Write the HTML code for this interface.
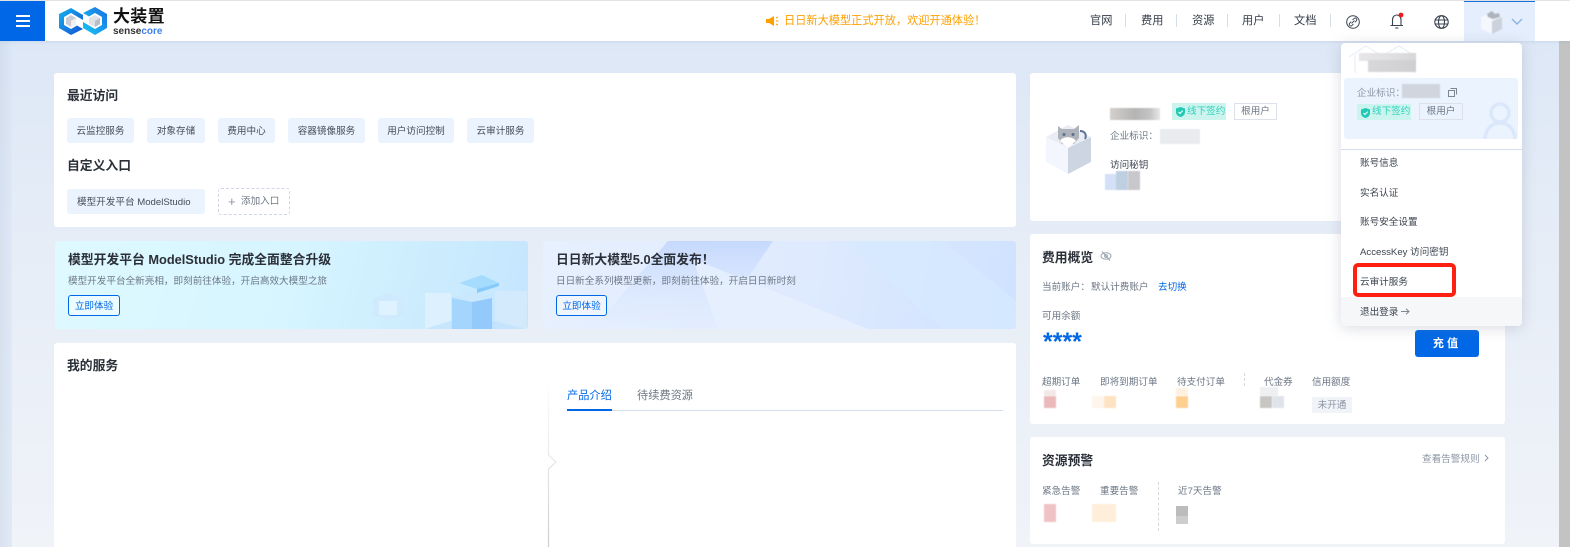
<!DOCTYPE html>
<html lang="zh"><head><meta charset="utf-8"><title>大装置</title>
<style>
*{box-sizing:border-box;margin:0;padding:0}
html,body{width:1570px;height:547px;overflow:hidden}
body{position:relative;font-family:"Liberation Sans","Noto Sans CJK SC",sans-serif;background:linear-gradient(180deg,#dbe6f6 0,#e6edf7 45%,#f0f3f8 100%);color:#333b47}
.a,.t{position:absolute}
.t{white-space:nowrap;line-height:16px;font-size:9.6px;color:#3c4450;margin-top:2px}
.card{position:absolute;background:#fff;border-radius:3px}
.h{font-size:12.8px;font-weight:700;color:#2b3038}
.chip{position:absolute;height:25px;background:#eaf3fe;border-radius:3px;font-size:9.6px;line-height:27px;text-align:center;color:#444c58;white-space:nowrap}
.nav{font-size:11.2px;color:#333b47;margin-top:1px}
.one{margin-top:1px}
.sep{position:absolute;top:14px;width:1px;height:13px;background:#d5dde8}
.b{position:absolute;filter:blur(.6px)}
.g{color:#6d7785}
.btn{position:absolute;height:21px;border:1px solid #0068e6;border-radius:3px;font-size:9.6px;line-height:21px;text-align:center;color:#0068e6;background:rgba(255,255,255,.45)}
.tag{position:absolute;height:17px;background:#ccf4ee;color:#2fd0bc;font-size:9.6px;line-height:17px;padding-left:15px;white-space:nowrap}
.root{position:absolute;height:17px;border:1px solid #dde2ea;color:#6d7785;font-size:9.6px;line-height:16px;text-align:center}
.shield{position:absolute;left:4px;top:4px}
.item{font-size:9.6px;color:#3c4450;left:1360px}
</style></head><body>

<!-- page edges -->
<div class="a" style="left:0;top:41px;width:12px;height:506px;background:linear-gradient(90deg,#cfdaea,#dbe6f6 100%);opacity:.7"></div>
<div class="a" style="left:1559px;top:41px;width:11px;height:506px;background:#c3c3c3"></div>

<!-- header -->
<div class="a" style="left:0;top:0;width:1570px;height:1px;background:#e6e6e6"></div>
<div class="a" style="left:0;top:1px;width:1570px;height:40px;background:#fff;box-shadow:0 1px 3px rgba(120,140,170,.18)"></div>
<div class="a" style="left:0;top:1px;width:45px;height:40px;background:#0068e6"></div>
<div class="a" style="left:16px;top:15px;width:14px;height:1.5px;background:#fff"></div>
<div class="a" style="left:16px;top:20px;width:14px;height:1.5px;background:#fff"></div>
<div class="a" style="left:16px;top:25px;width:14px;height:1.5px;background:#fff"></div>

<svg class="a" style="left:58px;top:6px" width="50" height="30" viewBox="0 0 50 30">
<defs><linearGradient id="l1" x1="0" y1="0" x2="1" y2="1"><stop offset="0" stop-color="#14b4f0"/><stop offset="1" stop-color="#1450d2"/></linearGradient>
<linearGradient id="l2" x1="0" y1="1" x2="1" y2="0"><stop offset="0" stop-color="#18c8f5"/><stop offset="1" stop-color="#1a6fe0"/></linearGradient></defs>
<path d="M13 2 L25 9 V14 L19 10.5 L13 7 L6 11 V19 L13 23 L19 19.5 L25 23 L13 29 L1 22 V8Z" fill="url(#l1)"/>
<path d="M37 1 L49 8 V22 L37 29 L25 22 V16 L31 19.5 L37 23 L44 19 V11 L37 7 L31 10.5 L25 7Z" fill="url(#l2)"/>
<path d="M8 12 L13 9 L18 12 V18 L13 21 L8 18Z" fill="#c9ccd2"/><path d="M13 15 L18 12 V18 L13 21Z" fill="#eef0f2"/>
<path d="M31 12 L37 9 L42 12 V18 L37 21 L31 18Z" fill="#dfe2e6"/><path d="M37 15 L42 12 V18 L37 21Z" fill="#b9bdc4"/>
</svg>
<div class="t" style="left:113px;top:6px;font-size:17px;line-height:18px;font-weight:700;color:#111;letter-spacing:.3px">大装置</div>
<div class="t" style="left:113px;top:23px;font-size:10px;line-height:13px;font-weight:700;color:#333">sense<span style="color:#3f7fee">core</span></div>

<svg class="a" style="left:765px;top:15px" width="14" height="12" viewBox="0 0 14 12"><path d="M1 4 H4 L9 1 V11 L4 8 H1Z" fill="#ffa000"/><path d="M11 3 L13 2 M11 6 H13.5 M11 9 L13 10" stroke="#ffa000" stroke-width="1"/></svg>
<div class="t one" style="left:784px;top:12px;font-size:11.2px;color:#ffa000">日日新大模型正式开放，欢迎开通体验！</div>

<div class="t nav" style="left:1090px;top:12px">官网</div><div class="sep" style="left:1125px"></div>
<div class="t nav" style="left:1141px;top:12px">费用</div><div class="sep" style="left:1176px"></div>
<div class="t nav" style="left:1192px;top:12px">资源</div><div class="sep" style="left:1227px"></div>
<div class="t nav" style="left:1242px;top:12px">用户</div><div class="sep" style="left:1279px"></div>
<div class="t nav" style="left:1294px;top:12px">文档</div><div class="sep" style="left:1330px"></div>

<svg class="a" style="left:1346px;top:15px" width="14" height="14" viewBox="0 0 14 14" fill="none" stroke="#3b4350"><circle cx="7" cy="7" r="6.3"/><path d="M6.5 5 L8 3.6 A1.4 1.4 0 0 1 10.3 5.8 L8.8 7.3" stroke-width=".9"/><path d="M7.4 9 L6 10.4 A1.4 1.4 0 0 1 3.7 8.2 L5.2 6.7" stroke-width=".9"/><path d="M5.6 8.4 L8.4 5.6" stroke-width=".9"/></svg>
<svg class="a" style="left:1388px;top:12px" width="17" height="18" viewBox="0 0 17 18" fill="none" stroke="#3b4350" stroke-width="1.1"><path d="M2.5 13.5 H15 M4.5 13 V8 C4.5 4.8 6.7 3 8.8 3 S13 4.8 13 8 V13"/><path d="M7.3 16 H10.3"/><circle cx="13" cy="3" r="2.4" fill="#f01a1a" stroke="none"/></svg>
<svg class="a" style="left:1434px;top:15px" width="15" height="14" viewBox="0 0 15 14" fill="none" stroke="#3b4350" stroke-width="1.1"><ellipse cx="7.5" cy="7" rx="6.7" ry="6.3"/><ellipse cx="7.5" cy="7" rx="3" ry="6.3"/><path d="M1 5 H14 M1 9 H14"/></svg>

<div class="a" style="left:1464px;top:1px;width:71px;height:40px;background:#e4eefc;border-top:1px solid #1a6fe0"></div>
<svg class="a" style="left:1480px;top:9px;filter:blur(.6px)" width="26" height="26" viewBox="0 0 26 26"><path d="M1 8 L12 3 L22 8 V20 L12 25 L1 20Z" fill="#f4f7fc"/><path d="M12 12 L22 8 V20 L12 25Z" fill="#ccd2dc"/><path d="M7 5 L12 2 L15 5 L19 4 L20 8 L13 10 L8 8Z" fill="#aeb4bd"/></svg>
<svg class="a" style="left:1511px;top:18px" width="12" height="8" viewBox="0 0 12 8" fill="none" stroke="#8cb2e6" stroke-width="1.4"><path d="M1 1 L6 6 L11 1"/></svg>

<!-- recent card -->
<div class="card" style="left:54px;top:73px;width:962px;height:154px"></div>
<div class="t h one" style="left:67px;top:87px">最近访问</div>
<div class="chip" style="left:67px;top:118px;width:67px">云监控服务</div>
<div class="chip" style="left:147px;top:118px;width:58px">对象存储</div>
<div class="chip" style="left:218px;top:118px;width:57px">费用中心</div>
<div class="chip" style="left:288px;top:118px;width:77px">容器镜像服务</div>
<div class="chip" style="left:378px;top:118px;width:76px">用户访问控制</div>
<div class="chip" style="left:467px;top:118px;width:67px">云审计服务</div>
<div class="t h one" style="left:67px;top:157px">自定义入口</div>
<div class="chip" style="left:67px;top:189px;width:138px;text-align:left;padding-left:10px">模型开发平台 ModelStudio</div>
<div class="a" style="left:218px;top:188px;width:72px;height:27px;border:1px dashed #cfd6e4;border-radius:3px"></div>
<div class="t g" style="left:228px;top:192px;font-size:13px;color:#8d96a3">+</div>
<div class="t g" style="left:241px;top:192px">添加入口</div>

<!-- banners -->
<div class="a" style="left:55px;top:241px;width:473px;height:88px;border-radius:3px;overflow:hidden;background:linear-gradient(105deg,#dff9ff 0,#d6f5ff 50%,#c4e5fe 100%)">
<svg class="a" style="left:310px;top:30px" width="163" height="58" viewBox="0 0 163 58">
<path d="M8 27 L23 22 L39 27 V44 L23 49 L8 44Z" fill="#cfe9fd" opacity=".8"/><path d="M14 30 H32 V44 H14Z" fill="#dff2ff"/>
<rect x="60" y="22" width="26" height="36" fill="#e3f2fd" opacity=".75"/><rect x="130" y="20" width="32" height="38" fill="#d6eafb" opacity=".8"/>
<path d="M60 58 L85 50 H130 L160 58Z" fill="#bfe0fd" opacity=".7"/>
<path d="M87 27 L107 22 L127 27 V58 H87Z" fill="#a4d5fd"/><path d="M107 31 L127 27 V58 H107Z" fill="#93c9fb"/><path d="M87 27 L107 22 L127 27 L107 31Z" fill="#c9e8fe"/>
<path d="M94 12 L117 4 L134 12 L112 18Z" fill="#a5dcfd"/><path d="M112 18 L134 12 V15 L112 22Z" fill="#86c9fb"/>
</svg></div>
<div class="t h one" style="left:68px;top:251px">模型开发平台 ModelStudio 完成全面整合升级</div>
<div class="t g" style="left:68px;top:272px">模型开发平台全新亮相，即刻前往体验，开启高效大模型之旅</div>
<div class="btn" style="left:68px;top:295px;width:52px">立即体验</div>

<div class="a" style="left:543px;top:241px;width:473px;height:88px;border-radius:3px;overflow:hidden;background:linear-gradient(100deg,#e6f0fe 0,#dfeafe 55%,#cfe2ff 100%)">
<svg class="a" style="left:0;top:0" width="473" height="88" viewBox="0 0 473 88"><defs><linearGradient id="s1" x1="0" y1="0" x2="0" y2="1"><stop offset="0" stop-color="#c6d9fd"/><stop offset="1" stop-color="#e4eefe" stop-opacity=".4"/></linearGradient></defs><path d="M125 0 H230 L170 88 H50 Z" fill="url(#s1)"/><path d="M150 18 L325 88 H175Z" fill="#e6effe" opacity=".9"/><path d="M300 0 H400 L473 60 V88 H400Z" fill="#d6e9ff" opacity=".7"/></svg></div>
<div class="t h one" style="left:556px;top:251px">日日新大模型5.0全面发布！</div>
<div class="t g" style="left:556px;top:272px">日日新全系列模型更新，即刻前往体验，开启日日新时刻</div>
<div class="btn" style="left:556px;top:295px;width:51px">立即体验</div>

<!-- services -->
<div class="card" style="left:54px;top:343px;width:962px;height:210px"></div>
<div class="t h" style="left:67px;top:356px">我的服务</div>
<svg class="a" style="left:545px;top:378px" width="14" height="169" viewBox="0 0 14 169" fill="none"><defs><linearGradient id="vg" x1="0" y1="0" x2="0" y2="1"><stop offset="0" stop-color="#fff"/><stop offset="1" stop-color="#cfcfcf"/></linearGradient></defs><path d="M3.5 0 V77 L11 84 L3.5 91 V169" stroke="url(#vg)" stroke-width="1.2"/></svg>
<div class="t" style="left:567px;top:386px;font-size:11.2px;color:#0068e6">产品介绍</div>
<div class="t" style="left:637px;top:386px;font-size:11.2px;color:#6d7785">待续费资源</div>
<div class="a" style="left:567px;top:410px;width:436px;height:1px;background:#d5ddea"></div>
<div class="a" style="left:567px;top:409px;width:45px;height:2px;background:#0068e6"></div>

<!-- account card -->
<div class="card" style="left:1030px;top:73px;width:475px;height:148px"></div>
<svg class="a" style="left:1045px;top:122px" width="48" height="54" viewBox="0 0 48 54"><path d="M1 15 L23 26 V52 L1 40Z" fill="#f3f7fd"/><path d="M23 26 L46 15 V40 L23 52Z" fill="#cdd5e2"/><path d="M1 15 L23 3 L46 15 L23 26Z" fill="#e9edf3"/><path d="M13 4 L17 7 H29 L34 3 V16 L29 22 H17 L13 16Z" fill="#aeb3bb"/><circle cx="19" cy="12.5" r="1.5" fill="#5c6f8c"/><circle cx="28" cy="12.5" r="1.5" fill="#5c6f8c"/><path d="M15 19 C17 14 28 14 31 19 L23 26Z" fill="#fff"/><path d="M35 9 C40 9 42 13 40 17" stroke="#5c7494" stroke-width="2" fill="none"/></svg>
<div class="b" style="left:1110px;top:108px;width:50px;height:12px;background:linear-gradient(90deg,#d4d0cc,#b4b4b4 50%,#c4c4c4 80%,#e8e8e8)"></div>
<div class="tag" style="left:1172px;top:103px;width:54px">
<svg class="shield" width="9" height="10" viewBox="0 0 9 10"><path d="M4.5 0 L9 1.5 V5 C9 8 6.5 9.5 4.5 10 C2.5 9.5 0 8 0 5 V1.5Z" fill="#22c9b4"/><path d="M2.5 5 L4 6.5 L6.7 3.6" stroke="#fff" fill="none"/></svg>线下签约</div>
<div class="root" style="left:1234px;top:103px;width:43px">根用户</div>
<div class="t g" style="left:1110px;top:127px">企业标识：</div>
<div class="b" style="left:1160px;top:129px;width:40px;height:15px;background:#e9ebef"></div>
<div class="t" style="left:1110px;top:156px">访问秘钥</div>
<div class="b" style="left:1105px;top:174px;width:12px;height:16px;background:#d3e0f7"></div>
<div class="b" style="left:1116px;top:171px;width:12px;height:19px;background:#bfcfe2"></div>
<div class="b" style="left:1128px;top:171px;width:12px;height:19px;background:#c8c8cc"></div>

<!-- cost card -->
<div class="card" style="left:1030px;top:234px;width:475px;height:190px"></div>
<div class="t h" style="left:1042px;top:248px">费用概览</div>
<svg class="a" style="left:1100px;top:250px" width="12" height="12" viewBox="0 0 12 12" fill="none" stroke="#9aa3b0"><ellipse cx="6" cy="6" rx="5" ry="3.2"/><circle cx="6" cy="6" r="1.4"/><path d="M2 1.5 L10 10.5"/></svg>
<div class="t g" style="left:1042px;top:278px">当前账户：</div>
<div class="t g" style="left:1091px;top:278px">默认计费账户</div>
<div class="t" style="left:1158px;top:278px;color:#0068e6">去切换</div>
<div class="t g" style="left:1042px;top:307px">可用余额</div>
<div class="t" style="left:1043px;top:331px;font-size:25px;font-weight:700;color:#0068e6;line-height:18px">****</div>
<div class="a" style="left:1415px;top:330px;width:64px;height:27px;background:#0068e6;border-radius:3px;color:#fff;font-size:11.2px;line-height:29px;text-align:center;letter-spacing:3px;font-weight:700">充值</div>
<div class="t g" style="left:1042px;top:373px">超期订单</div>
<div class="t g" style="left:1100px;top:373px">即将到期订单</div>
<div class="t g" style="left:1177px;top:373px">待支付订单</div>
<div class="a" style="left:1244px;top:373px;height:13px;border-left:1px dashed #d5d8de"></div>
<div class="t g" style="left:1264px;top:373px">代金券</div>
<div class="t g" style="left:1312px;top:373px">信用额度</div>
<div class="b" style="left:1044px;top:396px;width:12px;height:12px;background:#ebb9bb"></div>
<div class="b" style="left:1044px;top:390px;width:12px;height:6px;background:#f3e8e8"></div>
<div class="b" style="left:1092px;top:396px;width:12px;height:12px;background:#fef5ec"></div>
<div class="b" style="left:1104px;top:396px;width:12px;height:12px;background:#fde3c4"></div>
<div class="b" style="left:1176px;top:396px;width:12px;height:12px;background:#ffcf90"></div>
<div class="b" style="left:1176px;top:388px;width:12px;height:8px;background:#fdf2e2"></div>
<div class="b" style="left:1260px;top:396px;width:12px;height:12px;background:#c8c6c2"></div>
<div class="b" style="left:1272px;top:396px;width:12px;height:12px;background:#e0e4ea"></div>
<div class="b" style="left:1260px;top:387px;width:18px;height:9px;background:#eeeff1"></div>
<div class="a" style="left:1312px;top:397px;width:40px;height:16px;background:#f0f3f7;color:#8d96a3;font-size:9.6px;line-height:17px;text-align:center">未开通</div>

<!-- resources card -->
<div class="card" style="left:1030px;top:437px;width:475px;height:107px"></div>
<div class="t h" style="left:1042px;top:451px">资源预警</div>
<div class="t" style="left:1422px;top:450px;color:#8d96a3">查看告警规则</div>
<svg class="a" style="left:1484px;top:454px" width="6" height="8" viewBox="0 0 6 8" fill="none" stroke="#8d96a3"><path d="M1 1 L4 4 L1 7"/></svg>
<div class="t g" style="left:1042px;top:482px">紧急告警</div>
<div class="t g" style="left:1100px;top:482px">重要告警</div>
<div class="a" style="left:1158px;top:482px;height:49px;border-left:1px dashed #d5d8de"></div>
<div class="t g" style="left:1178px;top:482px">近7天告警</div>
<div class="b" style="left:1044px;top:504px;width:12px;height:18px;background:#efc3c5"></div>
<div class="b" style="left:1092px;top:504px;width:24px;height:18px;background:#feeeda"></div>
<div class="a" style="left:1176px;top:506px;width:12px;height:12px;background:#bcbcbc"></div>
<div class="a" style="left:1176px;top:516px;width:12px;height:8px;background:#cdcdcd"></div>

<!-- dropdown -->
<div class="a" style="left:1341px;top:43px;width:181px;height:283px;background:#fff;border-radius:4px;box-shadow:0 2px 14px rgba(120,130,150,.28);overflow:hidden">
<div class="a" style="left:0;top:254px;width:181px;height:29px;background:#f6f7f9"></div>
<svg class="a" style="left:8px;top:0" width="70" height="30" viewBox="0 0 70 30" fill="none" stroke="#e4ecf7"><path d="M0 14 L17 3 L33 13 V30 M33 13 L50 3 L66 13 V30 M6 12 V30"/></svg>
</div>
<div class="b" style="left:1359px;top:53px;width:57px;height:8px;background:linear-gradient(90deg,#e6e6e8,#e0e0e2 60%,#d6d6d8)"></div>
<div class="b" style="left:1368px;top:60px;width:48px;height:12px;background:linear-gradient(90deg,#d8d8da,#cfcfd1)"></div>
<div class="a" style="left:1344px;top:78px;width:174px;height:61px;background:#eaf3fe;border-radius:3px;overflow:hidden">
<svg class="a" style="left:138px;top:23px" width="36" height="38" viewBox="0 0 36 38" fill="none" stroke="#dbe8fb" stroke-width="3.5"><circle cx="18" cy="12" r="9"/><path d="M3 38 C4 26 11 22 18 22 S32 26 33 38"/></svg></div>
<div class="t g" style="left:1357px;top:84px;color:#8d96a3">企业标识：</div>
<div class="b" style="left:1402px;top:84px;width:38px;height:14px;background:#d0d5de"></div>
<svg class="a" style="left:1448px;top:88px" width="9" height="9" viewBox="0 0 9 9" fill="none" stroke="#7d8794"><rect x=".5" y="2.5" width="6" height="6"/><path d="M2.5 .5 H8.5 V6.5"/></svg>
<div class="tag" style="left:1357px;top:104px;width:54px;height:16px;line-height:16px">
<svg class="shield" width="9" height="10" viewBox="0 0 9 10"><path d="M4.5 0 L9 1.5 V5 C9 8 6.5 9.5 4.5 10 C2.5 9.5 0 8 0 5 V1.5Z" fill="#22c9b4"/><path d="M2.5 5 L4 6.5 L6.7 3.6" stroke="#fff" fill="none"/></svg>线下签约</div>
<div class="root" style="left:1419px;top:103px;width:44px">根用户</div>
<div class="a" style="left:1341px;top:149px;width:181px;height:1px;background:#d5ddea"></div>
<div class="t item" style="top:154px">账号信息</div>
<div class="t item" style="top:184px">实名认证</div>
<div class="t item" style="top:213px">账号安全设置</div>
<div class="t item" style="top:243px">AccessKey 访问密钥</div>
<div class="t item" style="top:273px">云审计服务</div>
<div class="t item" style="top:303px">退出登录 <svg width="9" height="7" viewBox="0 0 9 7" fill="none" stroke="#7d8794" style="vertical-align:0"><path d="M0 3.5 H8 M5 .7 L8 3.5 L5 6.3"/></svg></div>
<div class="a" style="left:1353px;top:263px;width:103px;height:34px;border:4.5px solid #ff2012;border-radius:5px"></div>
</body></html>
